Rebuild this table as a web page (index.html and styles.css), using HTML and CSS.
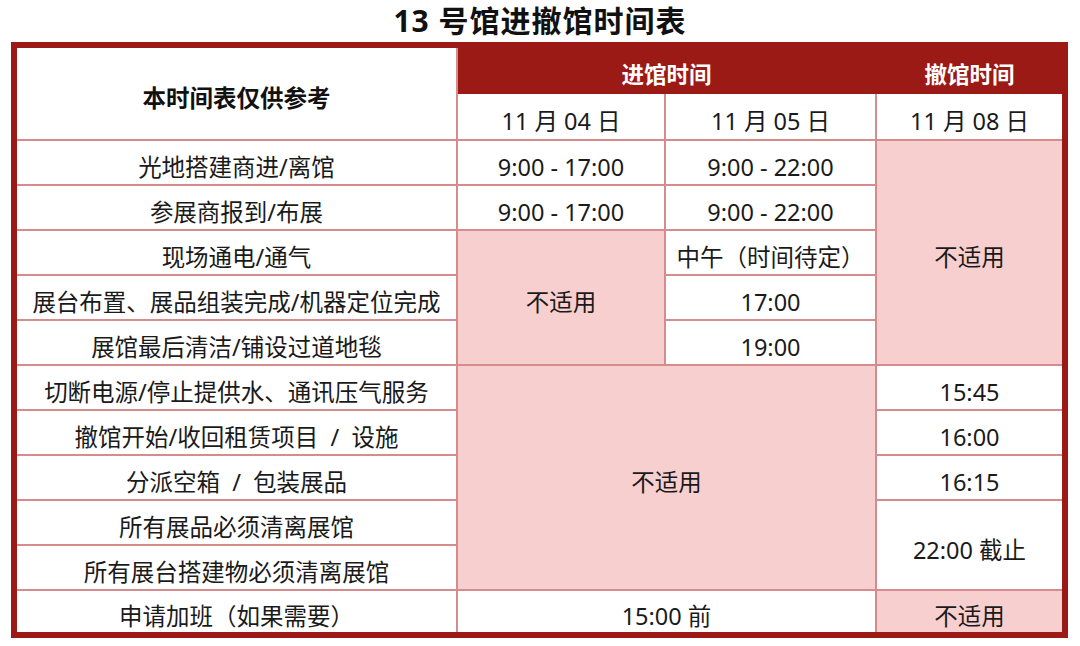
FILE: index.html
```html
<!DOCTYPE html>
<html lang="zh-CN">
<head>
<meta charset="utf-8">
<title>13 号馆进撤馆时间表</title>
<link rel="stylesheet" href="styles.css">
</head>
<body>
<h1 class="title">13 号馆进撤馆时间表</h1>
<table class="schedule">
  <colgroup>
    <col class="c-task">
    <col class="c-d1">
    <col class="c-d2">
    <col class="c-d3">
  </colgroup>
  <tr class="r-head">
    <td class="corner" rowspan="2">本时间表仅供参考</td>
    <td class="phase" colspan="2">进馆时间</td>
    <td class="phase">撤馆时间</td>
  </tr>
  <tr class="r-date">
    <td>11 月 04 日</td>
    <td>11 月 05 日</td>
    <td>11 月 08 日</td>
  </tr>
  <tr>
    <td>光地搭建商进/离馆</td>
    <td>9:00 - 17:00</td>
    <td>9:00 - 22:00</td>
    <td class="na" rowspan="5">不适用</td>
  </tr>
  <tr>
    <td>参展商报到/布展</td>
    <td>9:00 - 17:00</td>
    <td>9:00 - 22:00</td>
  </tr>
  <tr>
    <td>现场通电/通气</td>
    <td class="na" rowspan="3">不适用</td>
    <td>中午（时间待定）</td>
  </tr>
  <tr>
    <td>展台布置、展品组装完成/机器定位完成</td>
    <td>17:00</td>
  </tr>
  <tr>
    <td>展馆最后清洁/铺设过道地毯</td>
    <td>19:00</td>
  </tr>
  <tr>
    <td>切断电源/停止提供水、通讯压气服务</td>
    <td class="na" colspan="2" rowspan="5">不适用</td>
    <td>15:45</td>
  </tr>
  <tr>
    <td>撤馆开始/收回租赁项目 &nbsp;/ &nbsp;设施</td>
    <td>16:00</td>
  </tr>
  <tr>
    <td>分派空箱 &nbsp;/ &nbsp;包装展品</td>
    <td>16:15</td>
  </tr>
  <tr>
    <td>所有展品必须清离展馆</td>
    <td rowspan="2">22:00 截止</td>
  </tr>
  <tr>
    <td>所有展台搭建物必须清离展馆</td>
  </tr>
  <tr>
    <td>申请加班（如果需要）</td>
    <td colspan="2">15:00 前</td>
    <td class="na">不适用</td>
  </tr>
</table>
</body>
</html>
```

FILE: styles.css
```css
html, body {
  margin: 0;
  padding: 0;
  background: #ffffff;
}

body {
  font-family: "Noto Sans", "Noto Sans CJK SC", sans-serif;
  color: #1a1a1a;
}

.title {
  margin: 0;
  height: 42px;
  line-height: 42px;
  font-size: 30px;
  font-weight: 700;
  letter-spacing: 1px;
  text-align: center;
  color: #111111;
}

.schedule {
  margin: 0 0 0 11px;
  width: 1057px;
  table-layout: fixed;
  border-collapse: collapse;
  border: 6px solid #9b1a16;
}

.c-task { width: 443px; }
.c-d1 { width: 208px; }
.c-d2 { width: 211px; }
.c-d3 { width: 189px; }

.schedule tr {
  height: 45px;
}

.schedule tr.r-head {
  height: 48px;
}

.schedule tr.r-date {
  height: 47px;
}

.schedule td {
  border: 2px solid #d68c8c;
  padding: 9px 0 0 0;
  text-align: center;
  vertical-align: middle;
  font-size: 23.5px;
  line-height: 28px;
  white-space: nowrap;
  background: #ffffff;
}

.schedule td.corner {
  font-size: 23.5px;
  font-weight: 700;
  color: #111111;
}

.schedule td.phase {
  background: #9b1a16;
  border-color: #9b1a16;
  color: #ffffff;
  font-size: 22.5px;
  font-weight: 700;
}

.schedule td.na {
  background: #f8cfcf;
}
```
